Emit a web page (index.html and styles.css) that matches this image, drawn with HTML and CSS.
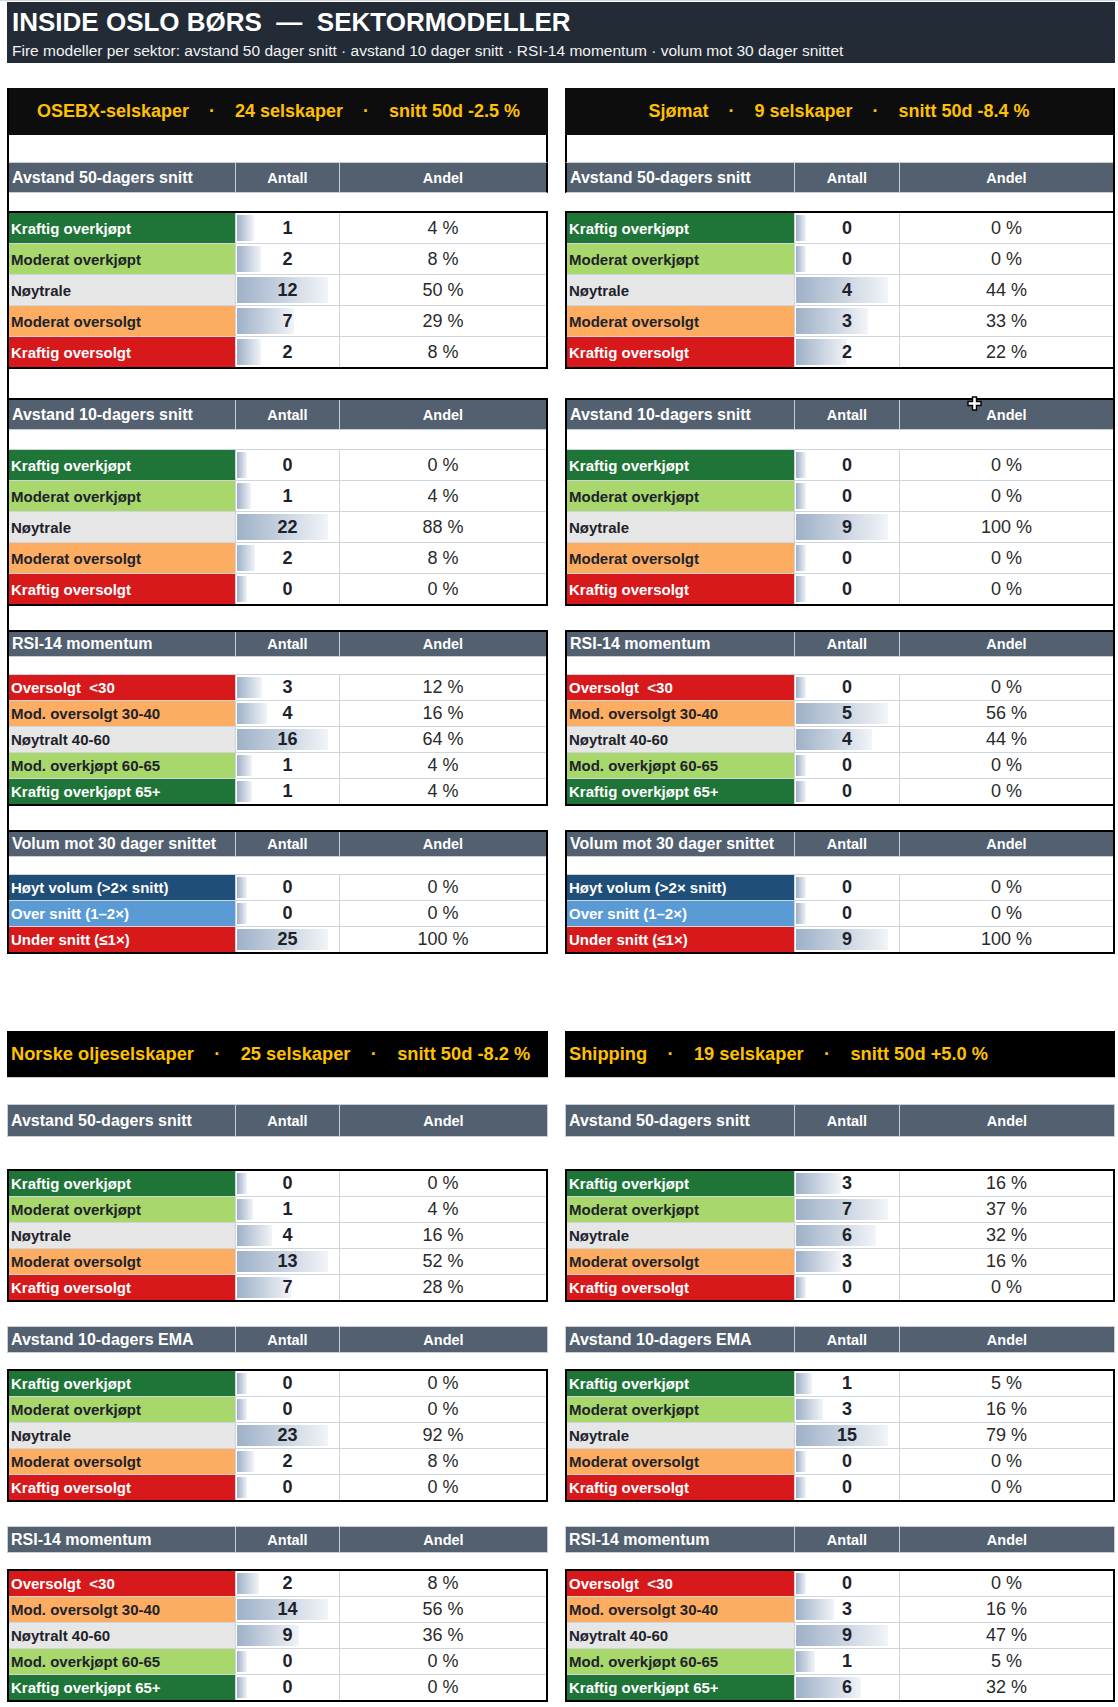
FILE: index.html
```html
<!DOCTYPE html>
<html lang="no">
<head>
<meta charset="utf-8">
<title>Inside Oslo Børs — Sektormodeller</title>
<link rel="stylesheet" href="styles.css">
</head>
<body>
<div class="page">
  <div class="titlebar">
    <div class="title">INSIDE OSLO BØRS  —  SEKTORMODELLER</div>
    <div class="subtitle">Fire modeller per sektor: avstand 50 dager snitt · avstand 10 dager snitt · RSI-14 momentum · volum mot 30 dager snittet</div>
  </div>

  <div class="top">
    <!-- OSEBX -->
    <div class="panel left">
      <div class="ptitle">OSEBX-selskaper    ·    24 selskaper    ·    snitt 50d -2.5 %</div>
      <div class="sides blank27"></div>
      <div class="sides colhead g1"><div class="c1">Avstand 50-dagers snitt</div><div class="c2">Antall</div><div class="c3">Andel</div></div>
      <div class="gap18"></div>
      <div class="sides box">
        <div class="rows">
          <div class="drow r30"><div class="lab kgo">Kraftig overkjøpt</div><div class="num"><i class="bar" style="width:16.5%"></i><span>1</span></div><div class="pct">4 %</div></div>
          <div class="drow r30"><div class="lab mgo">Moderat overkjøpt</div><div class="num"><i class="bar" style="width:23.1%"></i><span>2</span></div><div class="pct">8 %</div></div>
          <div class="drow r30"><div class="lab nt">Nøytrale</div><div class="num"><i class="bar" style="width:88.5%"></i><span>12</span></div><div class="pct">50 %</div></div>
          <div class="drow r30"><div class="lab mos">Moderat oversolgt</div><div class="num"><i class="bar" style="width:55.8%"></i><span>7</span></div><div class="pct">29 %</div></div>
          <div class="drow r30"><div class="lab kos">Kraftig oversolgt</div><div class="num"><i class="bar" style="width:23.1%"></i><span>2</span></div><div class="pct">8 %</div></div>
        </div>
      </div>
      <div class="gap29"></div>
      <div class="sides box">
        <div class="colhead h30"><div class="c1">Avstand 10-dagers snitt</div><div class="c2">Antall</div><div class="c3">Andel</div></div>
        <div class="blank20"></div>
        <div class="rows">
          <div class="drow r30"><div class="lab kgo">Kraftig overkjøpt</div><div class="num"><i class="bar" style="width:10%"></i><span>0</span></div><div class="pct">0 %</div></div>
          <div class="drow r30"><div class="lab mgo">Moderat overkjøpt</div><div class="num"><i class="bar" style="width:13.6%"></i><span>1</span></div><div class="pct">4 %</div></div>
          <div class="drow r30"><div class="lab nt">Nøytrale</div><div class="num"><i class="bar" style="width:88.5%"></i><span>22</span></div><div class="pct">88 %</div></div>
          <div class="drow r30"><div class="lab mos">Moderat oversolgt</div><div class="num"><i class="bar" style="width:17.1%"></i><span>2</span></div><div class="pct">8 %</div></div>
          <div class="drow r30"><div class="lab kos">Kraftig oversolgt</div><div class="num"><i class="bar" style="width:10%"></i><span>0</span></div><div class="pct">0 %</div></div>
        </div>
      </div>
      <div class="gap24"></div>
      <div class="sides box">
        <div class="colhead h25"><div class="c1">RSI-14 momentum</div><div class="c2">Antall</div><div class="c3">Andel</div></div>
        <div class="blank18"></div>
        <div class="rows">
          <div class="drow r25"><div class="lab kos">Oversolgt  &lt;30</div><div class="num"><i class="bar" style="width:24.7%"></i><span>3</span></div><div class="pct">12 %</div></div>
          <div class="drow r25"><div class="lab mos">Mod. oversolgt 30-40</div><div class="num"><i class="bar" style="width:29.6%"></i><span>4</span></div><div class="pct">16 %</div></div>
          <div class="drow r25"><div class="lab nt">Nøytralt 40-60</div><div class="num"><i class="bar" style="width:88.5%"></i><span>16</span></div><div class="pct">64 %</div></div>
          <div class="drow r25"><div class="lab mgo">Mod. overkjøpt 60-65</div><div class="num"><i class="bar" style="width:14.9%"></i><span>1</span></div><div class="pct">4 %</div></div>
          <div class="drow r25"><div class="lab kgo">Kraftig overkjøpt 65+</div><div class="num"><i class="bar" style="width:14.9%"></i><span>1</span></div><div class="pct">4 %</div></div>
        </div>
      </div>
      <div class="gap24"></div>
      <div class="sides box">
        <div class="colhead h25"><div class="c1">Volum mot 30 dager snittet</div><div class="c2">Antall</div><div class="c3">Andel</div></div>
        <div class="blank18"></div>
        <div class="rows">
          <div class="drow r25"><div class="lab hv">Høyt volum (&gt;2× snitt)</div><div class="num"><i class="bar" style="width:10%"></i><span>0</span></div><div class="pct">0 %</div></div>
          <div class="drow r25"><div class="lab ov">Over snitt (1–2×)</div><div class="num"><i class="bar" style="width:10%"></i><span>0</span></div><div class="pct">0 %</div></div>
          <div class="drow r25"><div class="lab us">Under snitt (≤1×)</div><div class="num"><i class="bar" style="width:88.5%"></i><span>25</span></div><div class="pct">100 %</div></div>
        </div>
      </div>
    </div>

    <!-- Sjømat -->
    <div class="panel right">
      <div class="ptitle">Sjømat    ·    9 selskaper    ·    snitt 50d -8.4 %</div>
      <div class="sides blank27"></div>
      <div class="sides colhead g1"><div class="c1">Avstand 50-dagers snitt</div><div class="c2">Antall</div><div class="c3">Andel</div></div>
      <div class="gap18"></div>
      <div class="sides box">
        <div class="rows">
          <div class="drow r30"><div class="lab kgo">Kraftig overkjøpt</div><div class="num"><i class="bar" style="width:10%"></i><span>0</span></div><div class="pct">0 %</div></div>
          <div class="drow r30"><div class="lab mgo">Moderat overkjøpt</div><div class="num"><i class="bar" style="width:10%"></i><span>0</span></div><div class="pct">0 %</div></div>
          <div class="drow r30"><div class="lab nt">Nøytrale</div><div class="num"><i class="bar" style="width:88.5%"></i><span>4</span></div><div class="pct">44 %</div></div>
          <div class="drow r30"><div class="lab mos">Moderat oversolgt</div><div class="num"><i class="bar" style="width:68.9%"></i><span>3</span></div><div class="pct">33 %</div></div>
          <div class="drow r30"><div class="lab kos">Kraftig oversolgt</div><div class="num"><i class="bar" style="width:49.3%"></i><span>2</span></div><div class="pct">22 %</div></div>
        </div>
      </div>
      <div class="gap29"></div>
      <div class="sides box">
        <div class="colhead h30"><div class="c1">Avstand 10-dagers snitt</div><div class="c2">Antall</div><div class="c3">Andel</div></div>
        <div class="blank20"></div>
        <div class="rows">
          <div class="drow r30"><div class="lab kgo">Kraftig overkjøpt</div><div class="num"><i class="bar" style="width:10%"></i><span>0</span></div><div class="pct">0 %</div></div>
          <div class="drow r30"><div class="lab mgo">Moderat overkjøpt</div><div class="num"><i class="bar" style="width:10%"></i><span>0</span></div><div class="pct">0 %</div></div>
          <div class="drow r30"><div class="lab nt">Nøytrale</div><div class="num"><i class="bar" style="width:88.5%"></i><span>9</span></div><div class="pct">100 %</div></div>
          <div class="drow r30"><div class="lab mos">Moderat oversolgt</div><div class="num"><i class="bar" style="width:10%"></i><span>0</span></div><div class="pct">0 %</div></div>
          <div class="drow r30"><div class="lab kos">Kraftig oversolgt</div><div class="num"><i class="bar" style="width:10%"></i><span>0</span></div><div class="pct">0 %</div></div>
        </div>
      </div>
      <div class="gap24"></div>
      <div class="sides box">
        <div class="colhead h25"><div class="c1">RSI-14 momentum</div><div class="c2">Antall</div><div class="c3">Andel</div></div>
        <div class="blank18"></div>
        <div class="rows">
          <div class="drow r25"><div class="lab kos">Oversolgt  &lt;30</div><div class="num"><i class="bar" style="width:10%"></i><span>0</span></div><div class="pct">0 %</div></div>
          <div class="drow r25"><div class="lab mos">Mod. oversolgt 30-40</div><div class="num"><i class="bar" style="width:88.5%"></i><span>5</span></div><div class="pct">56 %</div></div>
          <div class="drow r25"><div class="lab nt">Nøytralt 40-60</div><div class="num"><i class="bar" style="width:72.8%"></i><span>4</span></div><div class="pct">44 %</div></div>
          <div class="drow r25"><div class="lab mgo">Mod. overkjøpt 60-65</div><div class="num"><i class="bar" style="width:10%"></i><span>0</span></div><div class="pct">0 %</div></div>
          <div class="drow r25"><div class="lab kgo">Kraftig overkjøpt 65+</div><div class="num"><i class="bar" style="width:10%"></i><span>0</span></div><div class="pct">0 %</div></div>
        </div>
      </div>
      <div class="gap24"></div>
      <div class="sides box">
        <div class="colhead h25"><div class="c1">Volum mot 30 dager snittet</div><div class="c2">Antall</div><div class="c3">Andel</div></div>
        <div class="blank18"></div>
        <div class="rows">
          <div class="drow r25"><div class="lab hv">Høyt volum (&gt;2× snitt)</div><div class="num"><i class="bar" style="width:10%"></i><span>0</span></div><div class="pct">0 %</div></div>
          <div class="drow r25"><div class="lab ov">Over snitt (1–2×)</div><div class="num"><i class="bar" style="width:10%"></i><span>0</span></div><div class="pct">0 %</div></div>
          <div class="drow r25"><div class="lab us">Under snitt (≤1×)</div><div class="num"><i class="bar" style="width:88.5%"></i><span>9</span></div><div class="pct">100 %</div></div>
        </div>
      </div>
    </div>
  </div>

  <div class="bottom">
    <!-- Norske oljeselskaper -->
    <div class="panel left">
      <div class="lhead">Norske oljeselskaper    ·    25 selskaper    ·    snitt 50d -8.2 %</div>
      <div class="sp26"></div>
      <div class="colhead lc big"><div class="c1">Avstand 50-dagers snitt</div><div class="c2">Antall</div><div class="c3">Andel</div></div>
      <div class="sp32"></div>
      <div class="lbox">
        <div class="rows">
          <div class="drow r25"><div class="lab kgo">Kraftig overkjøpt</div><div class="num"><i class="bar" style="width:10%"></i><span>0</span></div><div class="pct">0 %</div></div>
          <div class="drow r25"><div class="lab mgo">Moderat overkjøpt</div><div class="num"><i class="bar" style="width:16%"></i><span>1</span></div><div class="pct">4 %</div></div>
          <div class="drow r25"><div class="lab nt">Nøytrale</div><div class="num"><i class="bar" style="width:34.2%"></i><span>4</span></div><div class="pct">16 %</div></div>
          <div class="drow r25"><div class="lab mos">Moderat oversolgt</div><div class="num"><i class="bar" style="width:88.5%"></i><span>13</span></div><div class="pct">52 %</div></div>
          <div class="drow r25"><div class="lab kos">Kraftig oversolgt</div><div class="num"><i class="bar" style="width:52.3%"></i><span>7</span></div><div class="pct">28 %</div></div>
        </div>
      </div>
      <div class="sp24"></div>
      <div class="colhead lc"><div class="c1">Avstand 10-dagers EMA</div><div class="c2">Antall</div><div class="c3">Andel</div></div>
      <div class="sp16"></div>
      <div class="lbox">
        <div class="rows">
          <div class="drow r25"><div class="lab kgo">Kraftig overkjøpt</div><div class="num"><i class="bar" style="width:10%"></i><span>0</span></div><div class="pct">0 %</div></div>
          <div class="drow r25"><div class="lab mgo">Moderat overkjøpt</div><div class="num"><i class="bar" style="width:10%"></i><span>0</span></div><div class="pct">0 %</div></div>
          <div class="drow r25"><div class="lab nt">Nøytrale</div><div class="num"><i class="bar" style="width:88.5%"></i><span>23</span></div><div class="pct">92 %</div></div>
          <div class="drow r25"><div class="lab mos">Moderat oversolgt</div><div class="num"><i class="bar" style="width:16.8%"></i><span>2</span></div><div class="pct">8 %</div></div>
          <div class="drow r25"><div class="lab kos">Kraftig oversolgt</div><div class="num"><i class="bar" style="width:10%"></i><span>0</span></div><div class="pct">0 %</div></div>
        </div>
      </div>
      <div class="sp24"></div>
      <div class="colhead lc"><div class="c1">RSI-14 momentum</div><div class="c2">Antall</div><div class="c3">Andel</div></div>
      <div class="sp16"></div>
      <div class="lbox">
        <div class="rows">
          <div class="drow r25"><div class="lab kos">Oversolgt  &lt;30</div><div class="num"><i class="bar" style="width:21.2%"></i><span>2</span></div><div class="pct">8 %</div></div>
          <div class="drow r25"><div class="lab mos">Mod. oversolgt 30-40</div><div class="num"><i class="bar" style="width:88.5%"></i><span>14</span></div><div class="pct">56 %</div></div>
          <div class="drow r25"><div class="lab nt">Nøytralt 40-60</div><div class="num"><i class="bar" style="width:60.5%"></i><span>9</span></div><div class="pct">36 %</div></div>
          <div class="drow r25"><div class="lab mgo">Mod. overkjøpt 60-65</div><div class="num"><i class="bar" style="width:10%"></i><span>0</span></div><div class="pct">0 %</div></div>
          <div class="drow r25"><div class="lab kgo">Kraftig overkjøpt 65+</div><div class="num"><i class="bar" style="width:10%"></i><span>0</span></div><div class="pct">0 %</div></div>
        </div>
      </div>
    </div>

    <!-- Shipping -->
    <div class="panel right">
      <div class="lhead">Shipping    ·    19 selskaper    ·    snitt 50d +5.0 %</div>
      <div class="sp26"></div>
      <div class="colhead lc big"><div class="c1">Avstand 50-dagers snitt</div><div class="c2">Antall</div><div class="c3">Andel</div></div>
      <div class="sp32"></div>
      <div class="lbox">
        <div class="rows">
          <div class="drow r25"><div class="lab kgo">Kraftig overkjøpt</div><div class="num"><i class="bar" style="width:43.6%"></i><span>3</span></div><div class="pct">16 %</div></div>
          <div class="drow r25"><div class="lab mgo">Moderat overkjøpt</div><div class="num"><i class="bar" style="width:88.5%"></i><span>7</span></div><div class="pct">37 %</div></div>
          <div class="drow r25"><div class="lab nt">Nøytrale</div><div class="num"><i class="bar" style="width:77.3%"></i><span>6</span></div><div class="pct">32 %</div></div>
          <div class="drow r25"><div class="lab mos">Moderat oversolgt</div><div class="num"><i class="bar" style="width:43.6%"></i><span>3</span></div><div class="pct">16 %</div></div>
          <div class="drow r25"><div class="lab kos">Kraftig oversolgt</div><div class="num"><i class="bar" style="width:10%"></i><span>0</span></div><div class="pct">0 %</div></div>
        </div>
      </div>
      <div class="sp24"></div>
      <div class="colhead lc"><div class="c1">Avstand 10-dagers EMA</div><div class="c2">Antall</div><div class="c3">Andel</div></div>
      <div class="sp16"></div>
      <div class="lbox">
        <div class="rows">
          <div class="drow r25"><div class="lab kgo">Kraftig overkjøpt</div><div class="num"><i class="bar" style="width:15.2%"></i><span>1</span></div><div class="pct">5 %</div></div>
          <div class="drow r25"><div class="lab mgo">Moderat overkjøpt</div><div class="num"><i class="bar" style="width:25.7%"></i><span>3</span></div><div class="pct">16 %</div></div>
          <div class="drow r25"><div class="lab nt">Nøytrale</div><div class="num"><i class="bar" style="width:88.5%"></i><span>15</span></div><div class="pct">79 %</div></div>
          <div class="drow r25"><div class="lab mos">Moderat oversolgt</div><div class="num"><i class="bar" style="width:10%"></i><span>0</span></div><div class="pct">0 %</div></div>
          <div class="drow r25"><div class="lab kos">Kraftig oversolgt</div><div class="num"><i class="bar" style="width:10%"></i><span>0</span></div><div class="pct">0 %</div></div>
        </div>
      </div>
      <div class="sp24"></div>
      <div class="colhead lc"><div class="c1">RSI-14 momentum</div><div class="c2">Antall</div><div class="c3">Andel</div></div>
      <div class="sp16"></div>
      <div class="lbox">
        <div class="rows">
          <div class="drow r25"><div class="lab kos">Oversolgt  &lt;30</div><div class="num"><i class="bar" style="width:10%"></i><span>0</span></div><div class="pct">0 %</div></div>
          <div class="drow r25"><div class="lab mos">Mod. oversolgt 30-40</div><div class="num"><i class="bar" style="width:36.2%"></i><span>3</span></div><div class="pct">16 %</div></div>
          <div class="drow r25"><div class="lab nt">Nøytralt 40-60</div><div class="num"><i class="bar" style="width:88.5%"></i><span>9</span></div><div class="pct">47 %</div></div>
          <div class="drow r25"><div class="lab mgo">Mod. overkjøpt 60-65</div><div class="num"><i class="bar" style="width:18.7%"></i><span>1</span></div><div class="pct">5 %</div></div>
          <div class="drow r25"><div class="lab kgo">Kraftig overkjøpt 65+</div><div class="num"><i class="bar" style="width:62.3%"></i><span>6</span></div><div class="pct">32 %</div></div>
        </div>
      </div>
    </div>
  </div>

  <svg class="cursor" width="16" height="16" viewBox="0 0 16 16" aria-hidden="true">
    <path d="M5.5 1h4v4.5h4.5v4h-4.5v4.5h-4v-4.5h-4.5v-4h4.5z" fill="#fff" stroke="#000" stroke-width="1.4"/>
  </svg>
</div>
</body>
</html>
```

FILE: styles.css
```css
* { box-sizing: border-box; }

body {
  margin: 0;
  background: #fff;
  font-family: "Liberation Sans", Arial, "Noto Sans", sans-serif;
  color: #1e222b;
}

.page {
  position: relative;
  width: 1118px;
  height: 1707px;
  padding: 1px 3px 0 7px;
  border-top: 1px solid #d4d8de;
  overflow: hidden;
}

/* ---------- title bar ---------- */
.titlebar {
  height: 61px;
  background: #222b36;
  color: #fff;
  padding: 5px 0 0 5px;
}
.title {
  font-weight: 700;
  font-size: 26px;
  line-height: 30px;
  white-space: pre;
}
.subtitle {
  margin-top: 5px;
  font-size: 15.5px;
  line-height: 18px;
  white-space: pre;
  color: #f2f2f2;
}

/* ---------- sections ---------- */
.top, .bottom {
  display: flex;
  align-items: flex-start;
  gap: 17px;
}
.top { margin-top: 25px; }
.bottom { margin-top: 77px; }

.panel {
  display: flex;
  flex-direction: column;
}
.panel.left { width: 541px; }
.panel.right { width: 550px; }

.top .panel.left { border-left: 2px solid #000; }
.top .panel.right { border-right: 2px solid #000; }
.top .panel.left .sides { border-right: 2px solid #000; }
.top .panel.right .sides { border-left: 2px solid #000; }

.ptitle {
  height: 47px;
  background: #0d0d0d;
  color: #ffc000;
  font-weight: 700;
  font-size: 18px;
  line-height: 47px;
  text-align: center;
  white-space: pre;
}

.lhead {
  height: 47px;
  background: #000;
  color: #ffc000;
  font-weight: 700;
  font-size: 18.3px;
  line-height: 46px;
  padding-left: 4px;
  border-bottom: 1px solid #c9ced5;
  white-space: pre;
}

.blank27 { height: 27px; }
.gap18 { height: 18px; }
.gap29 { height: 29px; }
.gap24 { height: 24px; }
.sp26 { height: 26px; }
.sp32 { height: 32px; }
.sp24 { height: 24px; }
.sp16 { height: 16px; }

.blank20 { height: 20px; border-bottom: 1px solid #d0d4db; }
.blank18 { height: 18px; border-bottom: 1px solid #d0d4db; }

.box {
  border-top: 2px solid #000;
  border-bottom: 2px solid #000;
}
.lbox {
  border: 2px solid #000;
}

/* ---------- column headers ---------- */
.colhead {
  display: grid;
  background: #536070;
  color: #fff;
  font-weight: 700;
}
.colhead > div {
  display: flex;
  align-items: center;
  border-right: 1px solid #c9ced5;
  white-space: nowrap;
}
.colhead > div:last-child { border-right: 0; }
.colhead .c1 { font-size: 16px; padding-left: 3px; }
.colhead .c2,
.colhead .c3 { font-size: 14.5px; justify-content: center; }

.colhead.g1 {
  height: 31px;
  border-top: 1px solid #c9ced5;
  border-bottom: 1px solid #c9ced5;
}
.colhead.h30 { height: 30px; border-bottom: 1px solid #c9ced5; }
.colhead.h25 { height: 25px; border-bottom: 1px solid #c9ced5; }
.colhead.lc { height: 27px; border: 1px solid #c9ced5; }
.colhead.lc.big { height: 33px; }

.left .colhead,
.left .drow { grid-template-columns: 227px 104px 1fr; }
.right .colhead,
.right .drow { grid-template-columns: 228px 105px 1fr; }
.bottom .left .colhead { grid-template-columns: 228px 104px 1fr; }
.bottom .right .colhead { grid-template-columns: 229px 105px 1fr; }

/* ---------- data rows ---------- */
.drow { display: grid; }
.drow.r30 { height: 30px; }
.drow.r25 { height: 25px; }
.rows .drow + .drow { border-top: 1px solid #d0d4db; }
.rows .drow.r30 + .drow.r30 { height: 31px; }
.rows .drow.r25 + .drow.r25 { height: 26px; }

.lab {
  display: flex;
  align-items: center;
  padding-left: 2px;
  font-weight: 700;
  font-size: 15px;
  white-space: pre;
  border-right: 1px solid #d0d4db;
}
.num {
  position: relative;
  display: flex;
  align-items: center;
  justify-content: center;
  font-family: "Liberation Sans Narrow", "Arial Narrow", "Liberation Sans", Arial, sans-serif;
  font-weight: 700;
  font-size: 18px;
  color: #1e222b;
  border-right: 1px solid #d0d4db;
}
.num span { position: relative; }
.bar {
  position: absolute;
  left: 1px;
  top: 2px;
  bottom: 2px;
  background: linear-gradient(90deg, #9eb1c8 0%, #f2f4f8 100%);
}
.pct {
  display: flex;
  align-items: center;
  justify-content: center;
  font-family: "Liberation Sans Narrow", "Arial Narrow", "Liberation Sans", Arial, sans-serif;
  font-size: 18px;
  color: #2b2b2b;
}

/* label colours */
.kgo { background: #1e7537; color: #fff; }
.mgo { background: #a8d86b; color: #1e222b; }
.nt  { background: #e6e6e6; color: #1e222b; }
.mos { background: #fcad62; color: #1e222b; }
.kos { background: #d7191c; color: #fff; }
.hv  { background: #1f4e79; color: #fff; }
.ov  { background: #5b9bd5; color: #fff; }
.us  { background: #d7191c; color: #fff; }

/* mouse cursor captured in the screenshot */
.cursor {
  position: absolute;
  left: 967px;
  top: 395px;
}
```
